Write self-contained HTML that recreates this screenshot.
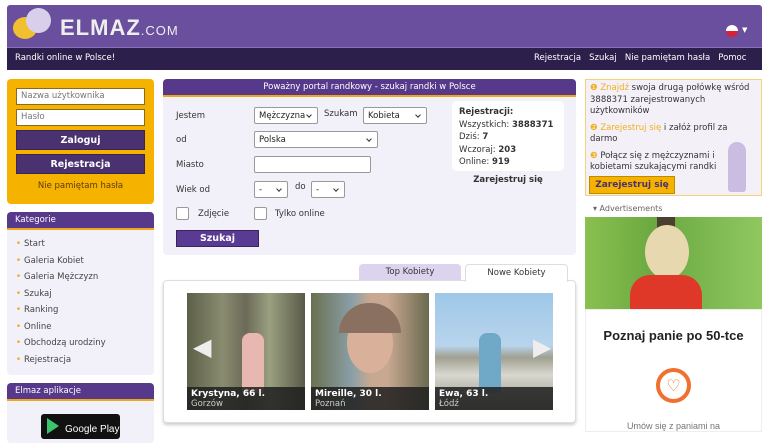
<!DOCTYPE html>
<html><head><meta charset="utf-8"><style>
*{box-sizing:border-box;margin:0;padding:0}
body{width:768px;height:432px;overflow:hidden;background:#fff;font-family:"DejaVu Sans","Liberation Sans",sans-serif;font-size:8.5px;color:#333;position:relative}
.a{position:absolute;white-space:nowrap}
.hdr{left:7px;top:5px;width:755px;height:42px;background:#6b4f9f;border-radius:3px 3px 0 0}
.bar{left:7px;top:47px;width:755px;height:23px;background:#2d1f4b;color:#fff;border-top:1px solid #8a72b8}
.inp{background:#fff;border:1px solid #8a6a20;height:17px;font-size:8.5px;color:#777;padding:2px 4px}
.btn{background:#4a3170;color:#fff;font-weight:bold;text-align:center;font-size:9.5px;height:20px;line-height:19px;border:1px solid #3a2458}
.box{background:#f2f0f8;border-radius:4px}
.bh{background:#56398a;color:#fff;height:18px;line-height:17px;font-size:8.5px;padding-left:8px;border-bottom:2px solid #f0a818;border-radius:4px 4px 0 0}
.sel{background:#fff;border:1px solid #999;height:17px;font-size:8.5px;padding:2px 4px;border-radius:2px;color:#222;line-height:12px}
.sel:after{content:"";position:absolute;right:6px;top:5px;width:3px;height:3px;border-right:1.3px solid #333;border-bottom:1.3px solid #333;transform:rotate(45deg)}
.nos:after{display:none}
.cat div{height:16.5px;font-size:8.5px;color:#444}
.cat span{color:#f0a818;margin-right:3px}
.ph{top:293px;width:118px;height:117px;overflow:hidden}
.cap{position:absolute;left:0;bottom:0;width:100%;height:23px;background:rgba(30,30,30,.85);color:#fff;padding:2px 4px;font-size:8.5px;line-height:10px}
.cap b{font-size:9px}
.cap i{font-style:normal;color:#ccc;display:block}
</style></head><body>
<div class="a hdr">
 <div class="a" style="left:6px;top:12px;width:24px;height:22px;border-radius:50%;background:#f0c030"></div>
 <div class="a" style="left:19px;top:3px;width:25px;height:25px;border-radius:50%;background:#d8d0ea"></div>
 <div class="a" style="left:53px;top:10px;color:#eee;font-family:'Liberation Sans',sans-serif;font-size:22px;font-weight:bold;letter-spacing:1px">ELMAZ<span style="font-size:13px;font-weight:normal">.COM</span></div>
 <div class="a" style="left:719px;top:20px;width:12px;height:12px;border-radius:50%;background:linear-gradient(#fff 50%,#d8203a 50%)"></div>
 <div class="a" style="left:735px;top:21px;color:#fff;font-size:7px">▼</div>
</div>
<div class="a bar">
 <div class="a" style="left:8px;top:5px">Randki online w Polsce!</div>
 <div class="a" style="left:527px;top:5px">Rejestracja&nbsp;&nbsp;&nbsp;Szukaj&nbsp;&nbsp;&nbsp;Nie pamiętam hasła&nbsp;&nbsp;&nbsp;Pomoc</div>
</div>
<div class="a" style="left:7px;top:79px;width:147px;height:125px;background:#f5b300;border-radius:4px">
 <div class="a inp" style="left:9px;top:9px;width:129px">Nazwa użytkownika</div>
 <div class="a inp" style="left:9px;top:30px;width:129px">Hasło</div>
 <div class="a btn" style="left:9px;top:51px;width:129px">Zaloguj</div>
 <div class="a btn" style="left:9px;top:75px;width:129px">Rejestracja</div>
 <div class="a" style="left:0;top:102px;width:147px;text-align:center;color:#5a3a10">Nie pamiętam hasła</div>
</div>
<div class="a box" style="left:7px;top:212px;width:147px;height:163px">
 <div class="bh">Kategorie</div>
 <div class="cat" style="padding:9px 0 0 9px">
  <div><span>•</span>Start</div><div><span>•</span>Galeria Kobiet</div><div><span>•</span>Galeria Mężczyzn</div><div><span>•</span>Szukaj</div><div><span>•</span>Ranking</div><div><span>•</span>Online</div><div><span>•</span>Obchodzą urodziny</div><div><span>•</span>Rejestracja</div>
 </div>
</div>
<div class="a box" style="left:7px;top:383px;width:147px;height:60px">
 <div class="bh">Elmaz aplikacje</div>
 <div class="a" style="left:34px;top:31px;width:79px;height:25px;background:#111;border-radius:3px;color:#fff;font-size:10px;padding:10px 0 0 24px;font-family:'Liberation Sans',sans-serif">Google Play</div>
 <div class="a" style="left:40px;top:35px;width:0;height:0;border-left:12px solid #3bc46a;border-top:8px solid transparent;border-bottom:8px solid transparent"></div>
</div>
<div class="a box" style="left:163px;top:79px;width:413px;height:176px">
 <div class="bh" style="text-align:center;padding:0">Poważny portal randkowy - szukaj randki w Polsce</div>
 <div class="a" style="left:13px;top:32px">Jestem</div>
 <div class="a sel" style="left:91px;top:28px;width:64px">Mężczyzna</div>
 <div class="a" style="left:161px;top:30px">Szukam</div>
 <div class="a sel" style="left:200px;top:28px;width:64px">Kobieta</div>
 <div class="a" style="left:13px;top:56px">od</div>
 <div class="a sel" style="left:91px;top:52px;width:124px">Polska</div>
 <div class="a" style="left:13px;top:81px">Miasto</div>
 <div class="a sel nos" style="left:91px;top:77px;width:117px"></div>
 <div class="a" style="left:13px;top:106px">Wiek od</div>
 <div class="a sel" style="left:91px;top:102px;width:34px">-</div>
 <div class="a" style="left:132px;top:103px">do</div>
 <div class="a sel" style="left:148px;top:102px;width:34px">-</div>
 <div class="a" style="left:13px;top:128px;width:13px;height:13px;background:#fff;border:1px solid #999;border-radius:2px"></div>
 <div class="a" style="left:35px;top:130px">Zdjęcie</div>
 <div class="a" style="left:91px;top:128px;width:13px;height:13px;background:#fff;border:1px solid #999;border-radius:2px"></div>
 <div class="a" style="left:112px;top:130px">Tylko online</div>
 <div class="a btn" style="left:13px;top:151px;width:83px;height:17px;line-height:15px;background:#5a3b94">Szukaj</div>
 <div class="a" style="left:289px;top:22px;width:112px;height:70px;background:#fff;border-radius:5px;padding:5px 7px;line-height:12.5px;font-size:8.5px">
  <b>Rejestracji:</b><br>Wszystkich: <b>3888371</b><br>Dziś: <b>7</b><br>Wczoraj: <b>203</b><br>Online: <b>919</b></div>
 <div class="a" style="left:289px;top:96px;width:112px;text-align:center;font-weight:bold">Zarejestruj się</div>
</div>
<div class="a" style="left:359px;top:264px;width:102px;height:17px;background:#dcd4ee;border-radius:4px 4px 0 0;text-align:center;line-height:17px">Top Kobiety</div>
<div class="a" style="left:465px;top:264px;width:103px;height:18px;background:#fff;border:1px solid #ddd;border-bottom:none;border-radius:4px 4px 0 0;text-align:center;line-height:17px;z-index:2">Nowe Kobiety</div>
<div class="a" style="left:163px;top:280px;width:413px;height:143px;background:#fff;border:1px solid #ddd;border-radius:4px;box-shadow:0 2px 3px #ccc"></div>
<div class="a ph" style="left:187px;background:linear-gradient(90deg,#5c6048,#8a8c70 30%,#6c6a58 50%,#9aa080 70%,#5a5a48)"><div class="a" style="left:6px;top:40px;color:#eee;font-size:24px">◀</div><div class="a" style="left:55px;top:40px;width:22px;height:60px;background:#e8b8b0;border-radius:8px 8px 2px 2px"></div><div class="cap"><b>Krystyna, 66 l.</b><i>Gorzów</i></div></div>
<div class="a ph" style="left:311px;background:linear-gradient(90deg,#6a7050,#8aa0a8 35%,#c8a890 50%,#c8a890 65%,#6a6a50)"><div class="a" style="left:36px;top:20px;width:46px;height:60px;border-radius:50%;background:#d9b09a"></div><div class="a" style="left:28px;top:10px;width:62px;height:30px;border-radius:30px 30px 0 0;background:#8a7060"></div><div class="cap"><b>Mireille, 30 l.</b><i>Poznań</i></div></div>
<div class="a ph" style="left:435px;background:linear-gradient(#9ec8e8,#b8d4ec 45%,#a0a090 55%,#d8d8d0 70%,#909080)"><div class="a" style="left:44px;top:40px;width:22px;height:60px;background:#70a8c8;border-radius:8px 8px 2px 2px"></div><div class="a" style="left:98px;top:40px;color:#eee;font-size:24px">▶</div><div class="cap"><b>Ewa, 63 l.</b><i>Łódź</i></div></div>
<div class="a" style="left:585px;top:79px;width:177px;height:117px;background:#f4f0f8;border:1px solid #f3d27a;padding:3px 4px;line-height:11.5px;font-size:8.5px;white-space:normal">
 <div><span style="color:#f0b020">❶ Znajdź</span> swoja drugą połówkę wśród 3888371 zarejestrowanych użytkowników</div>
 <div style="margin-top:5px"><span style="color:#f0b020">❷ Zarejestruj się</span> i załóż profil za darmo</div>
 <div style="margin-top:5px;width:145px"><span style="color:#f0b020">❸</span> Połącz się z mężczyznami i kobietami szukającymi randki</div>
 <div class="a" style="left:3px;top:96px;width:86px;height:18px;background:#f5b300;border:1px solid #c08a00;color:#4a3170;font-weight:bold;text-align:center;line-height:16px;font-size:9px">Zarejestruj się</div>
 <div class="a" style="left:142px;top:62px;width:18px;height:50px;background:#c0b0dc;border-radius:9px 9px 3px 3px;opacity:.8"></div>
</div>
<div class="a" style="left:593px;top:204px;color:#666;font-size:8px">▾ Advertisements</div>
<div class="a" style="left:585px;top:217px;width:177px;height:92px;background:linear-gradient(90deg,#8ac050,#6aa840 40%,#90c860)"><div class="a" style="left:72px;top:0;width:18px;height:92px;background:#4a4030"></div><div class="a" style="left:60px;top:8px;width:44px;height:54px;border-radius:50%;background:#e8d8b0"></div><div class="a" style="left:45px;top:58px;width:72px;height:34px;background:#e03828;border-radius:20px 20px 0 0"></div></div>
<div class="a" style="left:585px;top:309px;width:177px;height:123px;background:#fff;border:1px solid #eee"></div>
<div class="a" style="left:585px;top:328px;width:177px;text-align:center;font-family:'Liberation Sans',sans-serif;font-size:13px;font-weight:bold;color:#222">Poznaj panie po 50-tce</div>
<div class="a" style="left:656px;top:368px;width:35px;height:35px;border-radius:50%;border:4px solid #f07030;color:#f07030;text-align:center;font-size:16px;line-height:28px">♡</div>
<div class="a" style="left:585px;top:421px;width:177px;text-align:center;font-family:'Liberation Sans',sans-serif;font-size:9px;color:#777">Umów się z paniami na</div>
</body></html>
